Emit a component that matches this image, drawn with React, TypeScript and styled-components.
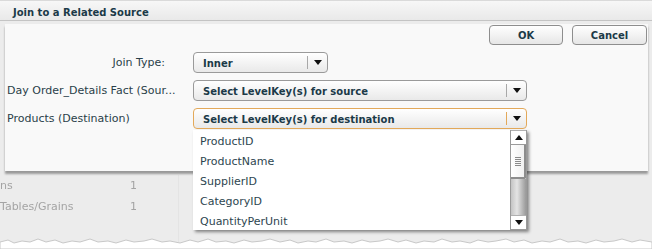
import { FC } from "react";
import styled, { createGlobalStyle } from "styled-components";

const GlobalStyle = createGlobalStyle`
  body {
    margin: 0;
    background: #ffffff;
  }
`;

const options = [
  "ProductID",
  "ProductName",
  "SupplierID",
  "CategoryID",
  "QuantityPerUnit",
];

const backdropRows = [
  { name: "ns", count: "1" },
  { name: "Tables/Grains", count: "1" },
];

const Arrow: FC<{ up?: boolean }> = ({ up }) => (
  <svg width="8" height="5" viewBox="0 0 8 5">
    <path d={up ? "M0 5 L4 0 L8 5 Z" : "M0 0 L8 0 L4 5 Z"} fill="#111" />
  </svg>
);

const TornEdge = () => (
  <TornSvg width="652" height="12" viewBox="0 0 652 12">
    <path
      d="M0 5 L8 3 L14 6 L22 4 L30 5 L38 2 L46 5 L55 3 L63 6 L72 4 L80 5 L90 2 L98 5 L108 4 L116 6 L126 3 L134 5 L144 4 L152 2 L162 5 L170 4 L180 6 L190 3 L198 5 L208 2 L216 5 L226 4 L234 6 L244 3 L252 5 L262 4 L270 2 L280 5 L290 3 L298 6 L308 4 L316 5 L326 2 L334 5 L344 4 L352 6 L362 3 L370 5 L380 4 L388 2 L398 5 L406 3 L416 6 L424 4 L434 5 L442 2 L452 5 L460 4 L470 6 L478 3 L488 5 L496 4 L506 2 L514 5 L524 3 L532 6 L542 4 L550 5 L560 2 L568 5 L578 4 L586 6 L596 3 L604 5 L614 4 L622 2 L632 5 L640 3 L652 5 L652 12 L0 12 Z"
      fill="#ffffff"
      stroke="#c8c8c8"
      strokeWidth="1"
    />
  </TornSvg>
);

interface SelectProps {
  value: string;
  width: number;
  focused?: boolean;
}

const Select: FC<SelectProps> = ({ value, width, focused }) => (
  <SelectBox $width={width} $focused={focused}>
    <SelectText>{value}</SelectText>
    <SelectButton $focused={focused}>
      <Arrow />
    </SelectButton>
  </SelectBox>
);

export default function App() {
  return (
    <Frame>
      <GlobalStyle />
      <TitleBar>Join to a Related Source</TitleBar>
      <Body>
        <Panel>
          <ButtonRow>
            <Button>OK</Button>
            <Button $wide>Cancel</Button>
          </ButtonRow>
          <Form>
            <FormRow>
              <Label $right>Join Type:</Label>
              <Select value="Inner" width={135} />
            </FormRow>
            <FormRow>
              <Label>Day Order_Details Fact (Sour...</Label>
              <Select value="Select LevelKey(s) for source" width={334} />
            </FormRow>
            <FormRow>
              <Label>Products (Destination)</Label>
              <DropAnchor>
                <Select
                  value="Select LevelKey(s) for destination"
                  width={334}
                  focused
                />
                <DropList>
                  <Items>
                    {options.map((o) => (
                      <Item key={o}>{o}</Item>
                    ))}
                  </Items>
                  <ScrollBar>
                    <ScrollButton>
                      <Arrow up />
                    </ScrollButton>
                    <Thumb>
                      <Grip />
                    </Thumb>
                    <Track />
                    <ScrollButton>
                      <Arrow />
                    </ScrollButton>
                  </ScrollBar>
                </DropList>
              </DropAnchor>
            </FormRow>
          </Form>
        </Panel>
        <Backdrop>
          {backdropRows.map((r) => (
            <BackdropRow key={r.name}>
              <BackdropName>{r.name}</BackdropName>
              <BackdropCount>{r.count}</BackdropCount>
            </BackdropRow>
          ))}
        </Backdrop>
        <TornEdge />
      </Body>
    </Frame>
  );
}

const Frame = styled.div`
  width: 652px;
  height: 249px;
  overflow: hidden;
  display: flex;
  flex-direction: column;
  background: #ececec;
  font-family: "DejaVu Sans", Verdana, sans-serif;
  font-size: 11px;
  color: #2a3f49;
`;

const TitleBar = styled.div`
  height: 21px;
  flex-shrink: 0;
  display: flex;
  align-items: center;
  padding: 3px 0 0 13px;
  box-sizing: border-box;
  border-top: 1px solid #dadada;
  border-bottom: 1px solid #c4c4c4;
  background: linear-gradient(#f7f7f7, #e9e9e9);
  font-size: 10px;
  font-weight: bold;
  color: #1b3a48;
`;

const Body = styled.div`
  flex: 1;
  display: flex;
  flex-direction: column;
  padding-top: 3px;
  position: relative;
`;

const Panel = styled.div`
  margin-left: 5px;
  width: 643px;
  height: 147px;
  flex-shrink: 0;
  background: #f9f9f9;
  box-shadow: 0 3px 2px rgba(0, 0, 0, 0.35);
  position: relative;
  z-index: 1;
`;

const ButtonRow = styled.div`
  display: flex;
  justify-content: flex-end;
  gap: 9px;
  padding: 1px 1px 0 0;
`;

const Button = styled.div<{ $wide?: boolean }>`
  width: ${(p) => (p.$wide ? 75 : 74)}px;
  height: 20px;
  box-sizing: border-box;
  display: flex;
  align-items: center;
  justify-content: center;
  padding-top: 1px;
  border: 1px solid #8e8e8e;
  border-radius: 4px;
  background: linear-gradient(#ffffff, #e6e6e6);
  font-size: 10px;
  font-weight: bold;
  color: #1b3a48;
`;

const Form = styled.div`
  display: flex;
  flex-direction: column;
  gap: 7px;
  margin-top: 7px;
  padding-left: 2px;
`;

const FormRow = styled.div`
  display: flex;
  align-items: center;
  height: 21px;
`;

const Label = styled.div<{ $right?: boolean }>`
  width: 186px;
  flex-shrink: 0;
  box-sizing: border-box;
  text-align: ${(p) => (p.$right ? "right" : "left")};
  padding-right: ${(p) => (p.$right ? 28 : 0)}px;
  white-space: nowrap;
`;

const SelectBox = styled.div<{ $width: number; $focused?: boolean }>`
  width: ${(p) => p.$width}px;
  height: 21px;
  box-sizing: border-box;
  display: flex;
  align-items: center;
  border: 1px solid ${(p) => (p.$focused ? "#e3a95a" : "#9a9a9a")};
  border-radius: 4px;
  background: linear-gradient(#ffffff, #e9e9e9);
`;

const SelectText = styled.div`
  flex: 1;
  padding: 1px 0 0 9px;
  font-size: 10px;
  font-weight: bold;
  color: #1b3a48;
  white-space: nowrap;
`;

const SelectButton = styled.div<{ $focused?: boolean }>`
  width: 19px;
  height: 13px;
  display: flex;
  align-items: center;
  justify-content: center;
  border-left: 1px solid ${(p) => (p.$focused ? "#e3a95a" : "#a8a8a8")};
`;

const DropAnchor = styled.div`
  position: relative;
`;

const DropList = styled.div`
  position: absolute;
  top: 22px;
  left: 0;
  width: 334px;
  height: 100px;
  display: flex;
  background: #ffffff;
  box-shadow: 2px 2px 3px rgba(0, 0, 0, 0.45);
`;

const Items = styled.div`
  flex: 1;
  padding: 2px 0 0 7px;
  overflow: hidden;
`;

const Item = styled.div`
  height: 20px;
  line-height: 20px;
  color: #2d4650;
`;

const ScrollBar = styled.div`
  width: 15px;
  display: flex;
  flex-direction: column;
  border-left: 1px solid #9a9a9a;
  border-right: 1px solid #9a9a9a;
`;

const ScrollButton = styled.div`
  height: 15px;
  display: flex;
  align-items: center;
  justify-content: center;
  background: #ffffff;
  border-top: 1px solid #b0b0b0;
  border-bottom: 1px solid #9a9a9a;
  box-sizing: border-box;
`;

const Thumb = styled.div`
  height: 34px;
  display: flex;
  align-items: center;
  justify-content: center;
  box-sizing: border-box;
  background: linear-gradient(to right, #ffffff, #f0f0f0);
  border-right: 2px solid #8c8c8c;
  border-bottom: 2px solid #8c8c8c;
  border-radius: 0 0 2px 0;
`;

const Grip = styled.div`
  width: 6px;
  height: 9px;
  background: repeating-linear-gradient(
    #8a8a8a 0,
    #8a8a8a 1px,
    transparent 1px,
    transparent 2px
  );
`;

const Track = styled.div`
  flex: 1;
  background: linear-gradient(to right, #c4c4c4, #e4e4e4 40%, #9a9a9a);
`;

const Backdrop = styled.div`
  display: flex;
  flex-direction: column;
  margin-top: 4px;
  width: 178px;
  border-right: 1px solid #e4e4e4;
  flex: 1;
  filter: blur(0.6px);
  color: #a4a4a4;
`;

const BackdropRow = styled.div`
  display: flex;
  height: 21px;
  align-items: center;
`;

const BackdropName = styled.div`
  width: 130px;
`;

const BackdropCount = styled.div``;

const TornSvg = styled.svg`
  position: absolute;
  left: 0;
  bottom: 0;
  display: block;
`;
